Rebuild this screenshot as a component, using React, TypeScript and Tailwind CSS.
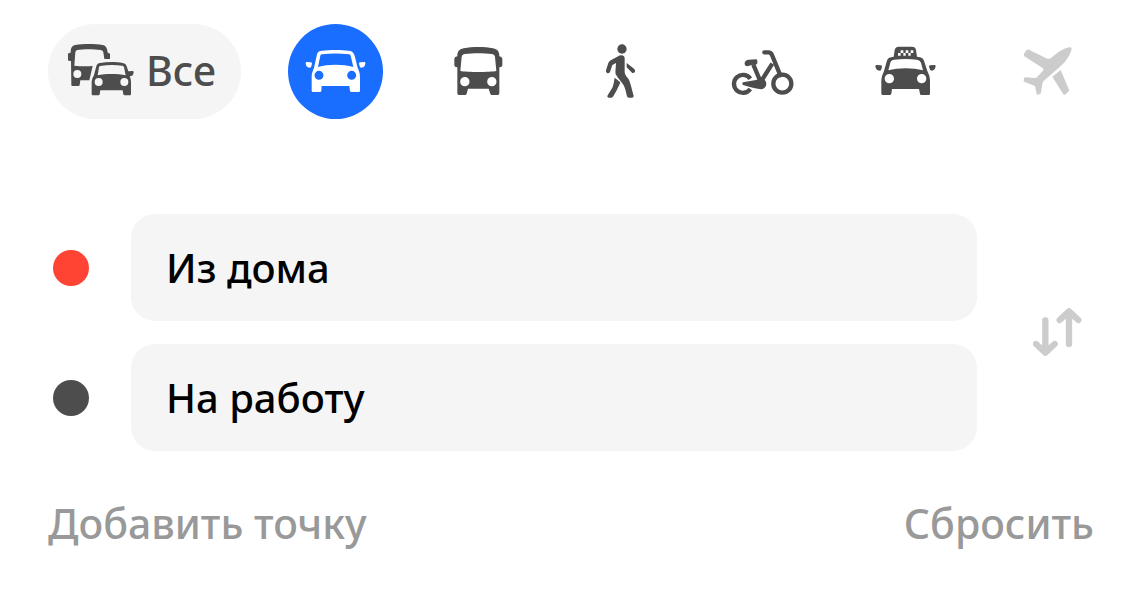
import { useState } from "react";
import type { ReactNode } from "react";
import clsx from "clsx";

type TransportMode = "all" | "car" | "bus" | "walk" | "bike" | "taxi" | "plane";

interface ModeOption {
  id: TransportMode;
  title: string;
  icon: ReactNode;
  disabled?: boolean;
}

function AllIcon() {
  return (
    <svg viewBox="84 87 198 156" className="h-[52px] w-[66px]" fill="currentColor" fillRule="evenodd" aria-hidden="true">
      <path d="M97 213Q94 213 94 209L93 138L86 137Q84 137 84 134V117Q85 113 92 113C92 99 96 92 106 90C130 86 165 86 188 90C198 92 202 100 203 113Q210 114 210 118V132H193L190 112Q189 106 182 105C160 102 130 102 112 105Q107 106 106 112L103 152Q130 155 158 153L148 196H121L119 210Q119 213 115 213ZM100 177a12 12 0 1 0 24 0a12 12 0 1 0-24 0Z" />
      <path d="M158 241Q155 241 155 237V204C155 190 160 186 162 180L169 154C171 147 174 145 180 144C203 140 229 140 248 144C255 145 258 148 260 154L265 169L278 168Q281 168 281 172C280 181 276 184 269 184C272 190 273 195 273 204V237Q273 241 270 241H254Q251 241 250 238L248 226H181L179 238Q179 241 175 241ZM180 153Q178 154 177 157L173 181C195 176 234 176 257 181L252 157Q251 153 247 152C225 149 202 149 180 153ZM164 201a12 12 0 1 0 24 0a12 12 0 1 0-24 0ZM241 201a12 12 0 1 0 24 0a12 12 0 1 0-24 0Z" />
    </svg>
  );
}

function CarIcon() {
  return (
    <svg viewBox="24 27 285 285" className="size-[95px]" fill="currentColor" fillRule="evenodd" aria-hidden="true">
      <path d="M99 231Q95 231 95 227V188C95 173 99 167 102 158L110 122C112 111 116 108 125 107C150 104 183 104 207 107C216 108 220 111 224 122L233 158C237 167 240 173 240 188V227Q240 231 236 231H214Q211 231 210 227L208 213H125L124 227Q124 231 120 231ZM126 118Q122 118 121 122L114 156C145 147 188 147 220 156L212 122Q211 118 206 118C181 115 151 115 126 118ZM103.500 181a13.500 13.500 0 1 0 27 0a13.500 13.500 0 1 0-27 0ZM201.500 181a13.500 13.500 0 1 0 27 0a13.500 13.500 0 1 0-27 0Z" />
      <path d="M80 141L92 142Q96 142 96 146L93 157C84 160 78 156 77 145Q77 141 80 141ZM253 141L240 142Q237 142 237 146L240 157C249 160 255 156 256 145Q256 141 253 141Z" />
    </svg>
  );
}

function BusIcon() {
  return (
    <svg viewBox="-28 -33 285 285" className="size-[95px]" fill="currentColor" fillRule="evenodd" aria-hidden="true">
      <path d="M56 180Q51 180 51 175V97L46 96Q42 95 42 91V71Q43 65 51 64C51 50 56 43 70 40C96 35 132 35 158 40C172 43 177 50 177 64Q185 65 186 71V91Q186 95 182 96L177 97V175Q177 180 172 180H154Q151 180 150 176L145 161H83L79 176Q78 180 74 180ZM74 57Q65 58 64 66L60 108C80 112 148 112 168 108L164 66Q163 58 154 57C130 54 98 54 74 57ZM59.500 140a14 14 0 1 0 28 0a14 14 0 1 0-28 0ZM140.500 140a14 14 0 1 0 28 0a14 14 0 1 0-28 0Z" />
    </svg>
  );
}

function WalkIcon() {
  return (
    <svg viewBox="-51 -33 285 285" className="size-[95px]" fill="currentColor" aria-hidden="true">
      <circle cx="96" cy="42" r="14" />
      <path d="M94 61C101 61 105 65 104 73V110C104 117 108 123 113 129C120 137 122 149 131 183Q131 188 126 188H117Q112 188 111 184C108 170 105 157 100 149C93 138 84 130 78 119C75 113 77 105 78 84L67 90L60 111Q56 117 51 114Q46 111 48 106L55 84Q57 79 62 76L82 65Q88 61 94 61Z" />
      <path d="M110 84L132 101Q138 106 134 112Q130 116 126 113L110 97ZM74 128L91 142C88 151 84 158 81 164L70 184Q68 188 64 188H56Q50 187 53 181L67 158C71 150 72 138 74 128Z" />
    </svg>
  );
}

function BikeIcon() {
  return (
    <svg viewBox="-28 -48 285 285" className="size-[95px]" fill="none" stroke="currentColor" strokeWidth="13" aria-hidden="true">
      <circle cx="174" cy="131" r="27" />
      <path d="M78 116A27 27 0 1 0 78 147" />
      <path d="M87 74L109 126L144 71" strokeLinejoin="round" />
      <path d="M120 37H132Q140 37 143 45L168 106" strokeLinecap="round" />
      <path d="M73 59L95 58Q100 59 99 65V70Q98 74 93 74L82 75L69 79Q62 79 61 73V68Q63 60 73 59ZM56 127L95 120L109 115A16 16 0 0 1 110 148C92 145 72 140 56 135Q52 131 56 127Z" fill="currentColor" stroke="none" />
    </svg>
  );
}

function TaxiIcon() {
  return (
    <svg viewBox="-30 -48 285 285" className="size-[95px]" fill="currentColor" fillRule="evenodd" aria-hidden="true">
      <path d="M45 165Q40 165 40 161V123C40 109 45 102 48 93L56 65C58 56 62 54 69 52L77 50L80 30Q82 20 93 20H131Q143 20 144 30L147 50L156 52C163 54 167 57 169 65L178 93C182 102 186 109 186 123V161Q186 165 182 165H160Q156 165 156 161L153 147H72L70 161Q69 165 65 165ZM79 59Q69 60 67 68L61 91C91 83 135 83 165 91L159 68Q156 60 147 59C124 56 102 56 79 59ZM50 116a14 14 0 1 0 28 0a14 14 0 1 0-28 0ZM147 116a14 14 0 1 0 28 0a14 14 0 1 0-28 0Z" />
      <path d="M98 31h8v8h-8ZM113 31h8v8h-8ZM128 31h8v8h-8ZM90 39h8v8h-8ZM106 39h7v8h-7ZM121 39h7v8h-7Z" fill="#fff" />
      <path d="M26 75L38 76Q42 76 42 80L39 91C30 94 24 90 22 79Q22 75 26 75ZM199 75L187 76Q183 76 183 80L187 91C195 94 201 90 203 79Q203 75 199 75Z" />
    </svg>
  );
}

function PlaneIcon() {
  return (
    <svg viewBox="-43 -48 285 285" className="size-[95px]" fill="currentColor" aria-hidden="true">
      <path d="M30 40L37 30Q40 27 44 29L99 56Q107 58 113 52C129 37 149 24 165 22Q171 21 172 26C169 43 154 66 136 81L88 123Q84 127 84 132L80 158Q80 161 77 162L71 164Q68 165 67 162L62 138L31 126Q27 124 28 121L29 115Q30 112 34 112L61 114Q66 114 69 110L86 92Q90 87 85 84L30 49Q26 45 30 40Z" />
      <path d="M114 110L139 90L164 149Q165 152 163 154L152 164Q149 166 147 163Z" />
    </svg>
  );
}

function SwapIcon() {
  return (
    <svg viewBox="38 40 147 147" className="size-[49px]" fill="none" stroke="currentColor" strokeWidth="19" strokeLinecap="round" strokeLinejoin="round" aria-hidden="true">
      <path d="M75 77V173M47 148L75 174L103 148" />
      <path d="M146 148V52M118 76L146 50L174 76" />
    </svg>
  );
}

const MODES: ModeOption[] = [
  { id: "car", title: "Автомобиль", icon: <CarIcon /> },
  { id: "bus", title: "Общественный транспорт", icon: <BusIcon /> },
  { id: "walk", title: "Пешком", icon: <WalkIcon /> },
  { id: "bike", title: "Велосипед", icon: <BikeIcon /> },
  { id: "taxi", title: "Такси", icon: <TaxiIcon /> },
  { id: "plane", title: "Самолёт", icon: <PlaneIcon />, disabled: true },
];

interface PointFieldProps {
  id: string;
  label: string;
  dotClass: string;
  value: string;
  onChange: (value: string) => void;
}

function PointField({ id, label, dotClass, value, onChange }: PointFieldProps) {
  return (
    <div className="flex items-center gap-[42px]">
      <label htmlFor={id} aria-label={label} className={clsx("size-9 shrink-0 rounded-full", dotClass)} />
      <input
        id={id}
        type="text"
        value={value}
        onChange={(e) => onChange(e.target.value)}
        className="h-[107px] min-w-0 flex-1 rounded-3xl bg-[#f5f5f5] px-[35px] text-[40px] text-black outline-none"
      />
    </div>
  );
}

export default function App() {
  const [mode, setMode] = useState<TransportMode>("car");
  const [from, setFrom] = useState("Из дома");
  const [to, setTo] = useState("На работу");

  const handleSwap = () => {
    setFrom(to);
    setTo(from);
  };

  const handleReset = () => {
    setFrom("");
    setTo("");
  };

  return (
    <main className="bg-white pt-6 font-['Noto_Sans','Open_Sans',sans-serif] text-[41px] leading-[56px] font-medium">
      {/* Transport modes */}
      <div className="flex items-center justify-between pr-[45px] pl-12 text-[#4d4d4d]">
        <button
          type="button"
          aria-pressed={mode === "all"}
          onClick={() => setMode("all")}
          className={clsx(
            "flex h-[95px] w-[193px] items-center gap-3 rounded-full pb-1 pl-5",
            mode === "all" ? "bg-[#196dff] text-white" : "bg-[#f5f5f5]"
          )}
        >
          <AllIcon />
          Все
        </button>
        {MODES.map((item) => (
          <button
            key={item.id}
            type="button"
            aria-label={item.title}
            aria-pressed={mode === item.id}
            disabled={item.disabled}
            onClick={() => setMode(item.id)}
            className={clsx(
              "size-[95px] rounded-full",
              mode === item.id && "bg-[#196dff] text-white",
              item.disabled && "text-[#ccc]"
            )}
          >
            {item.icon}
          </button>
        ))}
      </div>

      {/* Route points */}
      <div className="mt-[95px] flex items-stretch pl-[53px]">
        <div className="flex min-w-0 flex-1 flex-col gap-[23px]">
          <PointField id="from" label="Откуда" dotClass="bg-[#ff4433]" value={from} onChange={setFrom} />
          <PointField id="to" label="Куда" dotClass="bg-[#4d4d4d]" value={to} onChange={setTo} />
        </div>
        <button
          type="button"
          aria-label="Поменять местами"
          onClick={handleSwap}
          className="flex w-[163px] items-center justify-center pr-0.5 text-[#ccc]"
        >
          <SwapIcon />
        </button>
      </div>

      <div className="mt-11 flex justify-between pr-[46px] pb-11 pl-12 text-[#999]">
        <button type="button">Добавить точку</button>
        <button type="button" onClick={handleReset}>Сбросить</button>
      </div>
    </main>
  );
}
